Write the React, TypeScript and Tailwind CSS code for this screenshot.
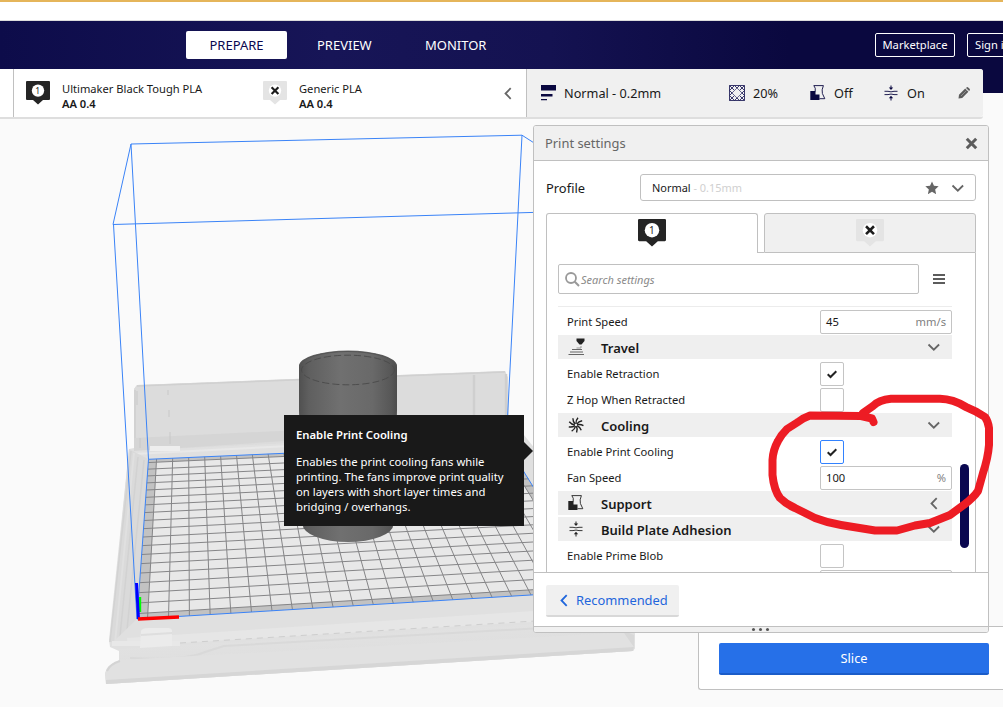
import type { ReactNode } from "react";

type Pt = [number, number];

const FRONT_LEFT: Pt = [137, 619];
const FRONT_RIGHT: Pt = [598.4, 590.9];
const BACK_RIGHT: Pt = [506.2, 443.4];
const BACK_LEFT: Pt = [148.5, 459.3];

/* Projects a unit-square coordinate of the build plate onto the viewport. */
function project(u: number, v: number): Pt {
  const [x0, y0] = FRONT_LEFT;
  const [x1, y1] = FRONT_RIGHT;
  const [x2, y2] = BACK_RIGHT;
  const [x3, y3] = BACK_LEFT;
  const dx1 = x1 - x2;
  const dx2 = x3 - x2;
  const sx = x0 - x1 + x2 - x3;
  const dy1 = y1 - y2;
  const dy2 = y3 - y2;
  const sy = y0 - y1 + y2 - y3;
  const det = dx1 * dy2 - dx2 * dy1;
  const g = (sx * dy2 - dx2 * sy) / det;
  const h = (dx1 * sy - sx * dy1) / det;
  const w = g * u + h * v + 1;
  return [
    ((x1 - x0 + g * x1) * u + (x3 - x0 + h * x3) * v + x0) / w,
    ((y1 - y0 + g * y1) * u + (y3 - y0 + h * y3) * v + y0) / w,
  ];
}

const segment = (a: Pt, b: Pt) => `M${a[0].toFixed(2)} ${a[1].toFixed(2)}L${b[0].toFixed(2)} ${b[1].toFixed(2)}`;

const columns = Array.from({ length: 23 }, (_, i) => (5 + i * 10) / 230);
const rows = Array.from({ length: 19 }, (_, i) => (5 + i * 10) / 190);
const columnPath = columns.map((u) => segment(project(u, 0), project(u, 1))).join("");
const rowPath = rows.map((v) => segment(project(0, v), project(1, v))).join("");
const innerPlate = [
  project(5 / 230, 5 / 190),
  project(225 / 230, 5 / 190),
  project(225 / 230, 185 / 190),
  project(5 / 230, 185 / 190),
].join(" ");
const plate = [FRONT_LEFT, FRONT_RIGHT, BACK_RIGHT, BACK_LEFT].join(" ");

function Scene() {
  return (
    <svg className="absolute inset-0" width="1003" height="707" viewBox="0 0 1003 707" fill="none">
      <defs>
        <linearGradient id="cyl" x1="299" x2="397" y1="0" y2="0" gradientUnits="userSpaceOnUse">
          <stop offset="0" stopColor="#505050" />
          <stop offset="0.1" stopColor="#5f5f5f" />
          <stop offset="0.42" stopColor="#707070" />
          <stop offset="0.75" stopColor="#696969" />
          <stop offset="0.94" stopColor="#575757" />
          <stop offset="1" stopColor="#4c4c4c" />
        </linearGradient>
        <linearGradient id="base" x1="0" x2="3" y1="630" y2="680" gradientUnits="userSpaceOnUse">
          <stop offset="0" stopColor="#dddddd" />
          <stop offset="0.5" stopColor="#e1e1e1" />
          <stop offset="1" stopColor="#dedede" />
        </linearGradient>
      </defs>
      {/* printer frame */}
      <path d="M134 389L137 385L505 371L508 378L508 415L560 480L625 590L635 634L635 648L633 651L106 684L105 673Q107 664 119 661L119 651L110 647L109 640L129 449L134 448Z" fill="#e0e0e0" />
      <path d="M134 389L137 385L505 371L508 378L509 432L134 451Z" fill="#dcdcdc" />
      <path d="M137 386L505 372" stroke="#d0d0d0" strokeWidth="1.500" />
      <path d="M135 390V448" stroke="#d2d2d2" strokeWidth="2" />
      <path d="M134 438L300 430V440L134 451Z" fill="#d5d5d5" />
      <path d="M474 375V420M506 374V415" stroke="#cfcfcf" strokeWidth="2.500" />
      <path d="M137 391V405M168 390V395M169 410V417M140 438V448M170 432V444" stroke="#c8c8c8" />
      <path d="M134 451L509 432V440L149 459Z" fill="#e0e0e0" />
      <path d="M134 454L290 446" stroke="#e8e8e8" strokeWidth="2" />
      <path d="M129 449L148 459L137 619L126 645L110 642Z" fill="#dadada" />
      <path d="M131 451L110 642M138 457L119 646M144 460L127 630" stroke="#d2d2d2" strokeWidth="1.5" />
      <path d="M134 453L115 643" stroke="#e0e0e0" strokeWidth="2" />
      <path d="M150 446H180V451H150Z" fill="#eeeeee" />
      <path d="M112 643L137 619L620 590L625 615L535 621L128 645Z" fill="#e0e0e0" />
      <path d="M127 638L533 611L620 606V617L533 622L128 646Z" fill="#e6e6e6" />
      <path d="M180 643L600 617" stroke="#cecece" strokeDasharray="6 5" />
      <path d="M119 649L620 619L632 632L119 661Z" fill="url(#base)" />
      <path d="M130 658Q185 661 205 652L224 646L560 627L600 632" stroke="#d9d9d9" strokeWidth="2" />
      <path d="M119 660L632 632L635 648L633 651L106 684L105 674Z" fill="#e1e1e1" />
      <path d="M106 680L634 647L633 651L106 684Z" fill="#d6d6d6" />
      <path d="M107 671Q110 664 120 661" stroke="#d4d4d4" strokeWidth="2" />
      <path d="M622 630L631 643L634 647V635Z" fill="#d8d8d8" />
      <path d="M112 641H180V646H112Z" fill="#e8e8e8" />
      <path d="M141 631Q142 628 148 628H168Q172 628 172 631V646L140 648Z" fill="#ebebeb" />
      <path d="M141 635L172 633" stroke="#dedede" strokeWidth="2" />
      {/* build plate */}
      <polygon points={plate} fill="#c2c2c2" />
      <polygon points={innerPlate} fill="#e8e8e8" />
      <path d={columnPath} stroke="#858587" strokeWidth="1" />
      <path d={rowPath} stroke="#858587" strokeWidth="1" />
      {/* model */}
      <path d="M299 366A49 15.5 0 0 1 397 366L397 410L393.500 524A45.500 18 0 0 1 302.500 524L299 410Z" fill="url(#cyl)" />
      <ellipse cx="348" cy="370" rx="46.500" ry="14.800" stroke="#4a4a4a" strokeWidth="0.9" strokeDasharray="7 3" />
      <path d="M299.500 367A48.500 15.5 0 0 1 396.500 367" stroke="#555555" />
      {/* build volume */}
      <g stroke="#3a83f7" strokeWidth="1">
        <path d="M137 619L148.500 459.300L284 453.300M506.200 443.400L598 590.900L137 619" />
        <path d="M131 144L522 135.200L598 184L600 210.500L113 224.500L131 144L148.500 459.300M113.500 224.500L137 619M522 135.200L506.200 443.400" />
      </g>
      {/* axes */}
      <path d="M140 597V612" stroke="#00ff00" strokeWidth="2.4" />
      <path d="M136.500 583L138.500 619" stroke="#0000ff" strokeWidth="3" />
      <path d="M138 619L179 617" stroke="#ff0000" strokeWidth="3.6" />
    </svg>
  );
}

function Chevron({ dir, className = "text-[#666]" }: { dir: "left" | "down"; className?: string }) {
  return dir === "down" ? (
    <svg width="13" height="9" viewBox="0 0 13 9" className={className} fill="none" stroke="currentColor" strokeWidth="1.800">
      <path d="M1.500 1.500L6.800 6.700L12.100 1.500" />
    </svg>
  ) : (
    <svg width="9" height="13" viewBox="0 0 9 13" className={className} fill="none" stroke="currentColor" strokeWidth="1.800">
      <path d="M7.700 1.200L2.500 6.500L7.700 11.800" />
    </svg>
  );
}

function Extruder({ active, large }: { active?: boolean; large?: boolean }) {
  const fill = active ? "#252525" : "#e4e4e4";
  return (
    <svg width={large ? 28 : 24} height={large ? 28 : 24} viewBox="0 0 24 24" className="block shrink-0">
      <path d="M1 0H23Q24 0 24 1V18Q24 19 23 19H17L12 23.500L7 19H1Q0 19 0 18V1Q0 0 1 0Z" fill={fill} />
      <circle cx="12" cy="9.600" r="6.200" fill="#fff" />
      {active ? (
        <text x="11.800" y="12.600" fontSize="8.500" textAnchor="middle" fill="#222" fontFamily="Noto Sans">
          1
        </text>
      ) : (
        <path d="M8.600 6.200L15.400 13M15.400 6.200L8.600 13" stroke="#1c1c1c" strokeWidth="2.200" />
      )}
    </svg>
  );
}

function SupportIcon({ color }: { color: string }) {
  return (
    <svg width="16" height="16" viewBox="0 0 16 16" fill="none">
      <path d="M3.800 0.600H13.400Q11.400 5 12.400 8.500L14.800 13.700H9.500" stroke={color} strokeWidth="0.9" />
      <path d="M3.800 0.600Q6 3 5.200 6.500" stroke={color} strokeWidth="0.9" />
      <path d="M0.300 6H5.500V9.500H9.500V15H0.300Z" fill={color} />
    </svg>
  );
}

function AdhesionIcon({ color }: { color: string }) {
  return (
    <svg width="16" height="16" viewBox="0 0 16 16" fill="none" stroke={color}>
      <path d="M1.500 6.300H5Q8 7.400 11 6.300H14.500M1.500 9.600H5Q8 8.500 11 9.600H14.500" strokeWidth="0.9" />
      <path d="M8 0.500V3M8 13V15.500" strokeWidth="1" />
      <path d="M5.800 2.500H10.200L8 5ZM5.800 13.300L8 10.800L10.200 13.300Z" fill={color} stroke="none" />
    </svg>
  );
}

function InfillIcon() {
  return (
    <svg width="16" height="16" viewBox="0 0 16 16" fill="none" stroke="#25245c" strokeWidth="0.900">
      <path d="M0.500 0.500H15.500V15.500H0.500Z" />
      <path d="M0.500 5.500L5.500 0.500M0.500 10.500L10.500 0.500L15.500 5.500M5.500 0.500L15.500 10.500M0.500 5.500L10.500 15.500M0.500 10.500L5.500 15.500L15.500 5.500M10.500 15.500L15.500 10.500M0.500 0.500L5 5M15.500 0.500L11 5M0.500 15.500L5 11M15.500 15.500L11 11" />
      <path d="M8 3.300L12.700 8L8 12.700L3.300 8Z" fill="#f0f0f0" stroke="none" />
    </svg>
  );
}

function TravelIcon() {
  return (
    <svg width="18" height="18" viewBox="0 0 18 18" fill="none">
      <path d="M8.500 0.500H16.500V3L13.500 6.500H11.500L8.500 3Z" fill="#222" />
      <path d="M8.500 10H13V8" stroke="#999" />
      <path d="M4 11.500H14M2 14H15M0.500 16.500H16" stroke="#666" strokeWidth="1.100" />
    </svg>
  );
}

function FanIcon() {
  return (
    <svg width="16" height="16" viewBox="0 0 16 16" fill="none" stroke="#222" strokeWidth="1.400">
      {[0, 40, 80, 120, 160, 200, 240, 280, 320].map((a) => (
        <path key={a} d="M8 6.800Q7.600 3.500 10 0.800" transform={`rotate(${a} 8 8)`} />
      ))}
    </svg>
  );
}

function TopBar() {
  return (
    <header className="flex h-[72px] bg-[linear-gradient(90deg,#0d0c4a_0px,#171557_330px,#141251_550px,#0a083f_790px,#0a083f_1003px)] text-[13px] text-white">
      <nav className="flex h-12 items-center pl-[186px]">
        <span className="flex h-7 w-[101px] items-center justify-center rounded-[2px] bg-white pt-px text-[#0a0850]">PREPARE</span>
        <span className="ml-[30px] w-[54px] whitespace-nowrap pt-[2px]">PREVIEW</span>
        <span className="ml-[54px] whitespace-nowrap pt-[2px]">MONITOR</span>
      </nav>
      <div className="ml-auto flex h-12 w-[128px] shrink-0 items-center gap-3 overflow-hidden text-[11.200px]">
        <span className="flex h-6 w-20 shrink-0 items-center justify-center rounded-[2px] border border-white pt-px">Marketplace</span>
        <span className="flex h-6 w-[60px] shrink-0 items-center whitespace-nowrap rounded-[2px] border border-white pl-[7px] pt-px">Sign in</span>
      </div>
    </header>
  );
}

function Material({ name, active }: { name: string; active?: boolean }) {
  return (
    <div className="flex gap-3">
      <Extruder active={active} />
      <div className="whitespace-nowrap text-[11.150px] leading-[15px] text-[#191919]">
        <div>{name}</div>
        <div className="font-semibold">AA 0.4</div>
      </div>
    </div>
  );
}

function StageBar() {
  return (
    <div className="relative z-10 -mt-6 flex h-[50px] w-[983px] rounded-r-[3px] border-b-2 border-[#dedede] bg-white text-[12.700px] text-[#191919]">
      <div className="w-[14px] border-r border-[#c0c0c0]" />
      <div className="flex w-[512px] pl-3 pt-3">
        <div className="w-[237px]">
          <Material name="Ultimaker Black Tough PLA" active />
        </div>
        <Material name="Generic PLA" />
        <div className="ml-auto pr-[14px] pt-[5.500px]">
          <Chevron dir="left" />
        </div>
      </div>
      <div className="flex flex-1 items-center rounded-r-[3px] border-l border-[#c0c0c0] bg-[#f0f0f0]">
        <svg width="16" height="16" viewBox="0 0 16 16" className="ml-[14px]">
          <path d="M0 0H15V5.500H0ZM0 9H11.500V11.500H0ZM0 14H6V15.200H0Z" fill="#0a0840" />
        </svg>
        <span className="ml-[7px] w-[165px] whitespace-nowrap pt-[2px]">Normal - 0.2mm</span>
        <InfillIcon />
        <span className="ml-[8px] w-[57px] pt-[2px]">20%</span>
        <SupportIcon color="#0a0840" />
        <span className="ml-2 w-[49px] pt-[2px]">Off</span>
        <AdhesionIcon color="#0a0840" />
        <span className="ml-2 w-[51px] pt-[2px]">On</span>
        <svg width="12" height="12" viewBox="0 0 12 12" fill="#5c5c5c">
          <path d="M0.500 11.500L1 7.800L7.200 1.600L10.400 4.800L4.200 11ZM8 0.900L8.800 0.200Q9.600 -0.200 10.200 0.400L11.600 1.800Q12.200 2.400 11.800 3.200L11.100 4Z" />
          <path d="M3 9L8.500 3.500" stroke="#a5a5a5" strokeWidth="0.700" />
        </svg>
      </div>
    </div>
  );
}

function Field({ value, unit }: { value: string; unit: string }) {
  return (
    <div className="flex h-6 w-[132px] items-center justify-between rounded-[2px] border border-[#c4c4c4] bg-white px-[5px]">
      <span>{value}</span>
      <span className="text-[#808080]">{unit}</span>
    </div>
  );
}

function Check({ on, focus }: { on?: boolean; focus?: boolean }) {
  return (
    <div
      className={`flex h-6 w-6 items-center justify-center rounded-[2px] border bg-white ${focus ? "border-[#3282ff]" : "border-[#c4c4c4]"}`}
    >
      {on && (
        <svg width="10" height="9" viewBox="0 0 10 9" fill="none" stroke="#222" strokeWidth="2">
          <path d="M0.700 4.300L3.500 7L9.300 1.200" />
        </svg>
      )}
    </div>
  );
}

function Setting({ label, children }: { label: string; children: ReactNode }) {
  return (
    <div className="flex h-[26px] shrink-0 pt-px">
      <span className="w-[262px] pl-[9px] leading-6">{label}</span>
      {children}
    </div>
  );
}

function Category({ label, icon, closed }: { label: string; icon: ReactNode; closed?: boolean }) {
  return (
    <div className="h-[26px] shrink-0">
      <div className="flex h-6 items-center bg-[#efefef] pr-[12px]">
        <span className="flex w-[43px] pl-[10px]">{icon}</span>
        <span className="pt-[2px] text-[13px] font-semibold leading-5">{label}</span>
        <span className="ml-auto flex w-[13px] justify-center pt-px">
          <Chevron dir={closed ? "left" : "down"} />
        </span>
      </div>
    </div>
  );
}

function PrintSettings() {
  return (
    <section className="relative z-20 ml-[533px] mt-[6px] flex h-[508px] w-[456px] flex-col overflow-hidden rounded-[3px] border border-[#c0c0c0] bg-white text-[12.900px] text-[#191919]">
      <div className="flex h-[35px] shrink-0 items-center justify-between border-b border-[#c0c0c0] bg-[#f0f0f0] pl-[11px] pr-[10px] text-[#666]">
        <span className="pt-[2px]">Print settings</span>
        <svg width="13" height="13" viewBox="0 0 13 13" stroke="#5c5c5c" strokeWidth="3">
          <path d="M1.800 1.800L11.200 11.200M11.200 1.800L1.800 11.200" />
        </svg>
      </div>
      <div className="flex shrink-0 items-center pl-3 pt-[13px]">
        <span className="w-[94px] pt-[2px]">Profile</span>
        <div className="flex h-[27px] w-[336px] items-center rounded-[3px] border border-[#c0c0c0] pl-[11px] text-[11.200px]">
          <span className="pt-px text-[10.950px]">
            Normal <span className="text-[#d0d0d0]">- 0.15mm</span>
          </span>
          <svg width="14" height="14" viewBox="0 0 24 24" className="ml-auto mr-3" fill="#666">
            <path d="M12 1L15.400 8.300L23.400 9.200L17.400 14.600L19.100 22.500L12 18.500L4.900 22.500L6.600 14.600L0.600 9.200L8.600 8.300Z" />
          </svg>
          <span className="mr-[11px] pt-px">
            <Chevron dir="down" />
          </span>
        </div>
      </div>
      <div className="mt-3 flex h-10 shrink-0 px-3">
        <div className="flex w-[212px] justify-center rounded-t-[3px] border border-b-0 border-[#c0c0c0] pt-[5px]">
          <Extruder active large />
        </div>
        <div className="w-[6px] border-b border-[#c0c0c0]" />
        <div className="flex w-[212px] justify-center rounded-t-[3px] border border-[#c0c0c0] bg-[#f0f0f0] pt-[5px]">
          <Extruder large />
        </div>
      </div>
      <div className="mx-3 flex h-[319px] shrink-0 overflow-hidden border-x border-[#c0c0c0] pl-[11px]">
        <div className="w-[394px] shrink-0 text-[11.200px]">
          <div className="flex items-center pt-[11px]">
            <div className="flex h-[30px] w-[361px] items-center rounded-[2px] border border-[#c0c0c0] pl-[6px] text-[11px] italic text-[#8a8a8a]">
              <svg width="15" height="15" viewBox="0 0 15 15" fill="none" stroke="#999" strokeWidth="1.800" className="mr-px">
                <circle cx="6" cy="6" r="5" />
                <path d="M9.800 9.800L14 14" strokeWidth="2" />
              </svg>
              <span className="pt-[2px]">Search settings</span>
            </div>
            <svg width="12" height="10" viewBox="0 0 12 10" className="ml-[14px]" fill="#5c5c5c">
              <path d="M0 0H12V2H0ZM0 4H12V6H0ZM0 8H12V10H0Z" />
            </svg>
          </div>
          <div className="mt-3 flex flex-col border-t border-[#ececec] pt-[2px]">
            <Setting label="Print Speed">
              <Field value="45" unit="mm/s" />
            </Setting>
            <Category label="Travel" icon={<TravelIcon />} />
            <Setting label="Enable Retraction">
              <Check on />
            </Setting>
            <Setting label="Z Hop When Retracted">
              <Check />
            </Setting>
            <Category label="Cooling" icon={<FanIcon />} />
            <Setting label="Enable Print Cooling">
              <Check on focus />
            </Setting>
            <Setting label="Fan Speed">
              <Field value="100" unit="%" />
            </Setting>
            <Category label="Support" icon={<SupportIcon color="#222" />} closed />
            <Category label="Build Plate Adhesion" icon={<AdhesionIcon color="#222" />} />
            <Setting label="Enable Prime Blob">
              <Check />
            </Setting>
            <Setting label="">
              <Field value="" unit="" />
            </Setting>
          </div>
        </div>
        <div className="ml-2 mt-[211px] h-[84px] w-[9px] shrink-0 rounded-full bg-[#0a0850]" />
      </div>
      <div className="flex-1 border-t border-[#c0c0c0] pl-3 pt-3">
        <div className="flex h-8 w-[133px] items-center rounded-[2px] border-b-2 border-[#d8d8d8] bg-[#f0f0f0] pl-[13px] text-[#1f66dc]">
          <Chevron dir="left" className="mr-2 text-[#1f66dc]" />
          <span className="pt-[2px]">Recommended</span>
        </div>
      </div>
      <div className="flex h-[6px] shrink-0 items-center justify-center gap-1 border-t border-[#c0c0c0] bg-[#f0f0f0] pr-[2px]">
        <i className="h-[3px] w-[3px] rounded-full bg-[#555]" />
        <i className="h-[3px] w-[3px] rounded-full bg-[#555]" />
        <i className="h-[3px] w-[3px] rounded-full bg-[#555]" />
      </div>
    </section>
  );
}

function Tooltip() {
  return (
    <div className="absolute left-[284px] top-[415px] z-30 h-[111px] w-[240px] bg-[#191919] px-3 pt-3 text-[11.300px] leading-[15px] text-white">
      <div className="mb-3 font-semibold">Enable Print Cooling</div>
      <div className="whitespace-nowrap">
        Enables the print cooling fans while
        <br />
        printing. The fans improve print quality
        <br />
        on layers with short layer times and
        <br />
        bridging / overhangs.
      </div>
      <svg className="absolute left-[240px] top-[27px]" width="9" height="18" viewBox="0 0 9 18">
        <path d="M0 0L9 9L0 18Z" fill="#191919" />
      </svg>
    </div>
  );
}

function Annotation() {
  return (
    <svg className="pointer-events-none absolute inset-0 z-40" width="1003" height="707" viewBox="0 0 1003 707" fill="none">
      <path
        d="M873.500 422L872 418.500L861 416L810 415.500Q803 418 798 422L787 429Q781 435 778 441Q773 450 772.500 460V475Q774 490 780 498Q786 504 795 508L815 518Q828 523 841 525L875 530.500H897L915 525.500L930 523L950 515L965 504Q974 497 978 491L983 473Q988 458 989 445V428Q988 421 985 417Q976 411 966 407Q953 399 940 398.800H891Q879 400 873 406L863 413"
        stroke="#ed1c24"
        strokeWidth="8"
        strokeLinecap="round"
        strokeLinejoin="round"
      />
    </svg>
  );
}

export default function App() {
  return (
    <div className="relative h-[707px] w-[1003px] overflow-hidden bg-[#fafafa] font-['Noto_Sans',sans-serif]">
      <Scene />
      <div className="relative">
        <div className="h-[21px] border-b border-t-2 border-b-[#dcdcdc] border-t-[#e5b55a] bg-white" />
        <TopBar />
        <StageBar />
        <PrintSettings />
        <div className="-mt-[7px] ml-[698px] h-[64px] rounded-l-[3px] border border-r-0 border-[#c0c0c0] bg-white pl-5 pt-4">
          <div className="flex h-8 w-[270px] items-center justify-center rounded-[2px] border-b-2 border-[#1b5cc8] bg-[#2670e8] pt-[2px] text-[12.800px] text-white">
            Slice
          </div>
        </div>
      </div>
      <Tooltip />
      <Annotation />
    </div>
  );
}
